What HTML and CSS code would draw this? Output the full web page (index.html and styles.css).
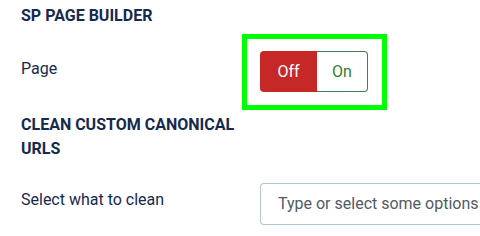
FILE: index.html
```html
<!DOCTYPE html>
<html lang="en">
<head>
    <meta charset="UTF-8">
    <title>SP Page Builder options</title>
    <link rel="stylesheet" href="styles.css">
</head>
<body>
    <div class="options-form">
        <h3 class="section-title">SP PAGE BUILDER</h3>

        <div class="control-group toggle-row">
            <div class="control-label">Page</div>
            <div class="controls">
                <div class="switcher highlight">
                    <span class="switcher-btn off active">Off</span>
                    <span class="switcher-btn on">On</span>
                </div>
            </div>
        </div>

        <h3 class="section-title">CLEAN CUSTOM CANONICAL<br>URLS</h3>

        <div class="control-group select-row">
            <div class="control-label">Select what to clean</div>
            <div class="controls">
                <div class="choices-input">Type or select some options</div>
            </div>
        </div>
    </div>
</body>
</html>
```

FILE: styles.css
```css
body {
    margin: 0;
    font-family: Roboto, "Liberation Sans", Arial, sans-serif;
    background: #fff;
    color: #152a4f;
    overflow: hidden;
}
.options-form {
    padding: 4px 0 0 21px;
}
.section-title {
    margin: 0;
    font-size: 16px;
    font-weight: bold;
    line-height: 24px;
}
.control-group {
    display: flex;
    align-items: flex-start;
}
.control-label {
    width: 239px;
    flex-shrink: 0;
    font-size: 16px;
    line-height: 24px;
}
.toggle-row {
    margin-top: 23px;
    margin-bottom: 21px;
}
.toggle-row .control-label {
    padding-top: 6px;
}
.switcher {
    display: flex;
    width: 108px;
    height: 41px;
    box-sizing: border-box;
    border-radius: 4px;
    font-size: 16px;
}
/* green highlight frame drawn over the toggle */
.highlight {
    position: relative;
}
.highlight::after {
    content: '';
    position: absolute;
    left: -18px;
    top: -17px;
    right: -19px;
    bottom: -18px;
    border: 5px solid #00ff00;
}
.switcher-btn {
    display: flex;
    align-items: center;
    justify-content: center;
}
.switcher-btn.off {
    width: 57px;
    background: #c52827;
    color: #fff;
    border-radius: 4px 0 0 4px;
}
.switcher-btn.on {
    flex: 1;
    color: #2f7d32;
    border: 1px solid #457d54;
    border-left: none;
    border-radius: 0 4px 4px 0;
}
.select-row {
    margin-top: 22px;
}
.select-row .control-label {
    padding-top: 5px;
}
.choices-input {
    width: 220px;
    height: 42px;
    box-sizing: border-box;
    border: 1px solid #b2c3dc;
    border-right: none;
    border-radius: 4px 0 0 4px;
    padding-left: 17px;
    font-size: 16px;
    line-height: 40px;
    color: #525a66;
    white-space: nowrap;
    overflow: hidden;
}
```
